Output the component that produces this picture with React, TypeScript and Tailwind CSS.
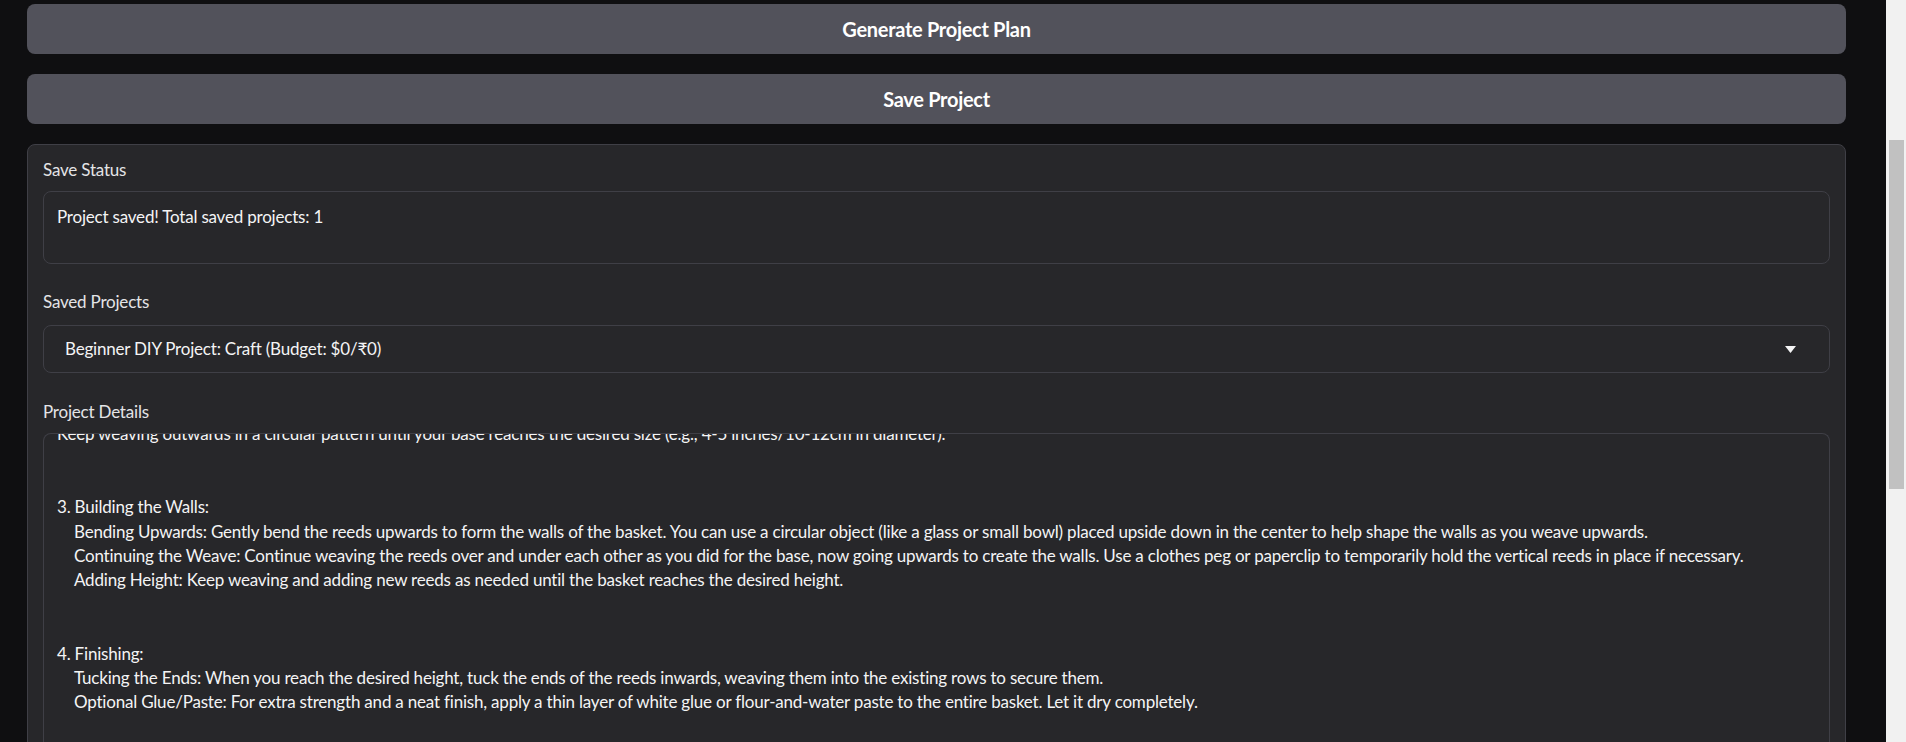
import React from "react";

const details: { text: string; indent?: boolean }[] = [
  { text: "Keep weaving outwards in a circular pattern until your base reaches the desired size (e.g., 4-5 inches/10-12cm in diameter)." },
  { text: "" },
  { text: "" },
  { text: "3. Building the Walls:" },
  { text: "Bending Upwards: Gently bend the reeds upwards to form the walls of the basket. You can use a circular object (like a glass or small bowl) placed upside down in the center to help shape the walls as you weave upwards.", indent: true },
  { text: "Continuing the Weave: Continue weaving the reeds over and under each other as you did for the base, now going upwards to create the walls. Use a clothes peg or paperclip to temporarily hold the vertical reeds in place if necessary.", indent: true },
  { text: "Adding Height: Keep weaving and adding new reeds as needed until the basket reaches the desired height.", indent: true },
  { text: "" },
  { text: "" },
  { text: "4. Finishing:" },
  { text: "Tucking the Ends: When you reach the desired height, tuck the ends of the reeds inwards, weaving them into the existing rows to secure them.", indent: true },
  { text: "Optional Glue/Paste: For extra strength and a neat finish, apply a thin layer of white glue or flour-and-water paste to the entire basket. Let it dry completely.", indent: true },
  { text: "" },
  { text: "" },
];

const Label = ({ children }: { children: React.ReactNode }) => (
  <div className="h-[22px] leading-[22px] text-[17px] text-[#e4e4e7] tracking-[-0.2px]">{children}</div>
);

export default function App() {
  return (
    <div className="flex h-[742px] w-full overflow-hidden bg-[#0f0f11] font-['Lato',sans-serif] text-[#f4f4f5]">
      <main className="flex min-w-0 flex-1 flex-col gap-[20px] pl-[27px] pr-[40px] pt-[4px]">
        <button className="h-[50px] w-full shrink-0 rounded-lg bg-[#52525b] text-[20px] font-bold tracking-[-0.3px] text-white">
          Generate Project Plan
        </button>
        <button className="h-[50px] w-full shrink-0 rounded-lg bg-[#52525b] text-[20px] font-bold tracking-[-0.3px] text-white">
          Save Project
        </button>

        <section className="flex shrink-0 flex-col rounded-lg border border-[#3f3f46] bg-[#27272a] px-[15px] pt-[14px]">
          <Label>Save Status</Label>
          <div className="mt-[10px] h-[73px] rounded-lg border border-[#3f3f46] bg-[#27272a] px-[13px] pt-[13px] text-[17px] leading-[24.4px] tracking-[-0.2px] text-[#f4f4f5]">
            Project saved! Total saved projects: 1
          </div>

          <div className="mt-[27px]">
            <Label>Saved Projects</Label>
          </div>
          <div className="mt-[12px] flex h-[48px] items-center justify-between rounded-lg border border-[#3f3f46] bg-[#27272a] pl-[21px] pr-[33px] text-[17px] tracking-[-0.2px]">
            <span>Beginner DIY Project: Craft (Budget: $0/₹0)</span>
            <svg width="11" height="7" viewBox="0 0 11 7">
              <polygon points="0,0 11,0 5.5,7" fill="#f4f4f5" />
            </svg>
          </div>

          <div className="mt-[28px]">
            <Label>Project Details</Label>
          </div>
          <div className="mt-[10px] h-[340px] overflow-hidden rounded-t-lg border border-b-0 border-[#3f3f46] bg-[#27272a] px-[13px]">
            <div className="-mt-[12px] text-[17px] leading-[24.4px] tracking-[-0.2px] text-[#f4f4f5]">
              {details.map((l, i) => (
                <div key={i} className={`h-[24.4px] whitespace-nowrap ${l.indent ? "pl-[17px]" : ""}`}>
                  {l.text}
                </div>
              ))}
            </div>
          </div>
        </section>
      </main>
      <div className="flex w-[20px] shrink-0 justify-center bg-[#f1f1f1] pt-[140px]">
        <div className="h-[349px] w-[15px] bg-[#c1c1c1]" />
      </div>
    </div>
  );
}
